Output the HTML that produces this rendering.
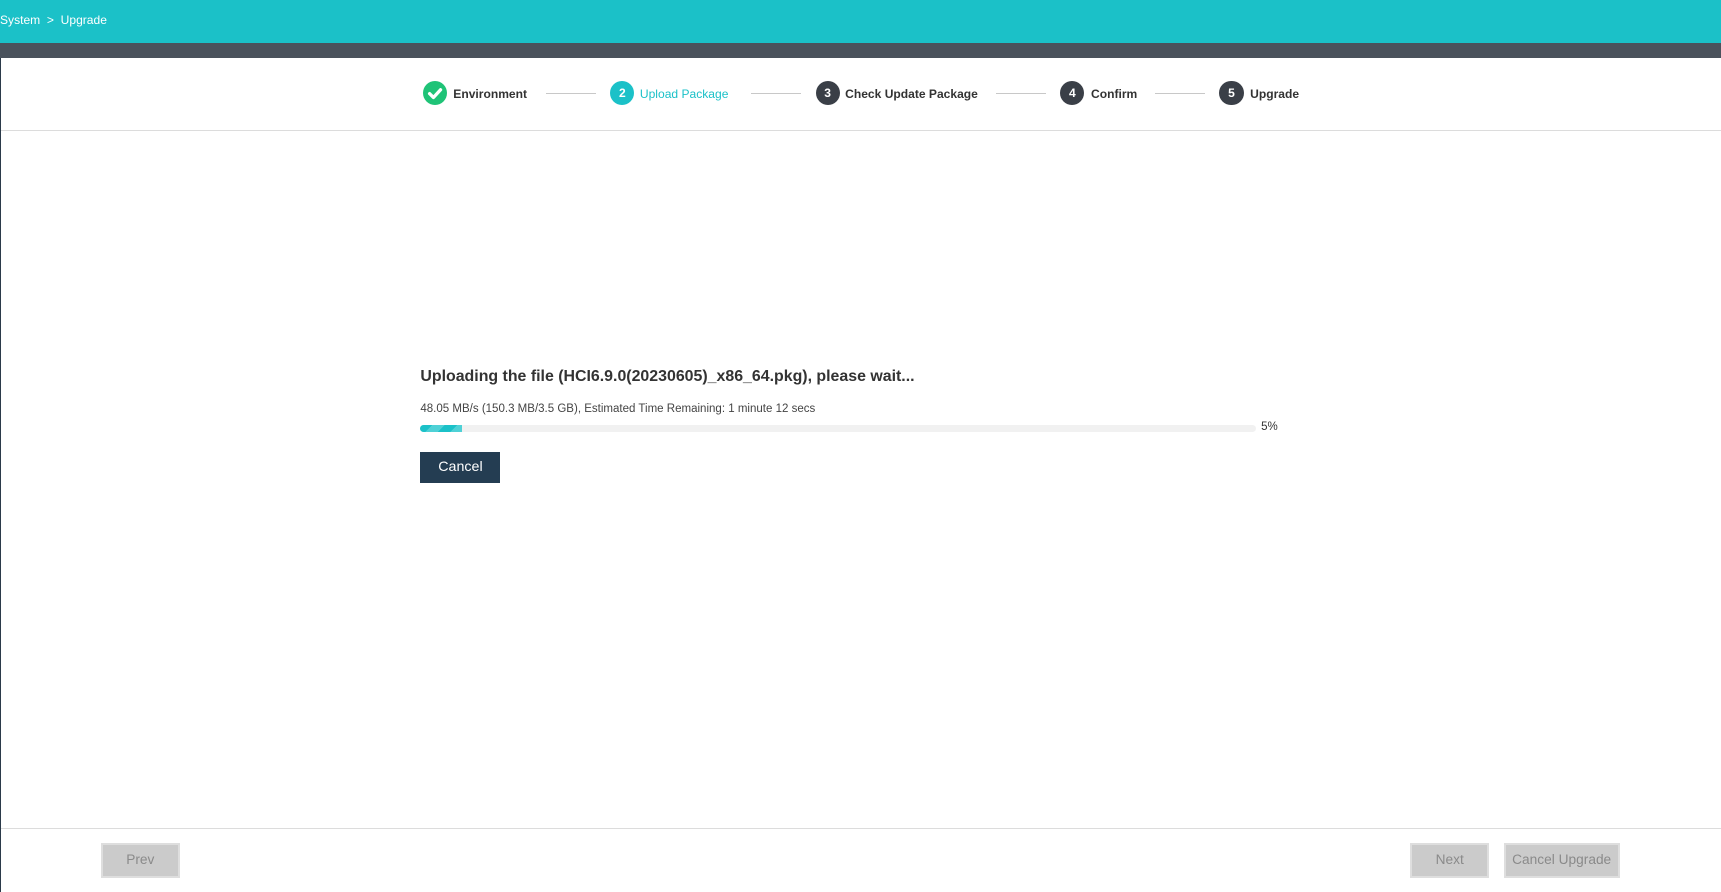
<!DOCTYPE html>
<html><head><style>
html{zoom:1.0976}
body{margin:0;width:1568px;height:813px;position:relative;overflow:hidden;font-family:"Liberation Sans",Arial,sans-serif;background:#fff}
.a{position:absolute}
.hd{left:0;top:0;width:1568px;height:39px;background:#1bc1c8;color:#fff;font-size:11px;line-height:38px}
.band{left:0;top:39px;width:1568px;height:14px;background:#4a525c}
.lb{left:0;top:53px;width:1px;height:760px;background:#2b3a4a}
.c{width:22px;height:22px;border-radius:50%;top:74px;color:#fff;font-size:11px;font-weight:bold;text-align:center;line-height:22px}
.t{top:79px;font-size:11px;font-weight:bold;color:#333;line-height:14px}
.ln{top:85px;height:1px;background:#c8c8c8;width:46px}
.btn{top:768px;height:28px;background:#cbcbcb;border:2px solid #dedede;color:#8a8a8a;font-size:12.5px;text-align:center;line-height:28px;box-sizing:content-box}
</style></head><body>
<div class="a hd">System &nbsp;&gt;&nbsp; Upgrade</div>
<div class="a band"></div>
<div class="a lb"></div>

<div class="a c" style="left:385px;background:#1fc377"><svg width="22" height="22" viewBox="0 0 22 22"><path d="M6 11.5l3.5 3.5 6.5-7" stroke="#fff" stroke-width="3" fill="none" stroke-linecap="round" stroke-linejoin="round"/></svg></div>
<div class="a t" style="left:413px">Environment</div>
<div class="a ln" style="left:497px"></div>
<div class="a c" style="left:556px;background:#1bc1c8">2</div>
<div class="a t" style="left:583px;color:#1bc1c8;font-weight:normal">Upload Package</div>
<div class="a ln" style="left:684px"></div>
<div class="a c" style="left:743px;background:#3a3f47">3</div>
<div class="a t" style="left:770px">Check Update Package</div>
<div class="a ln" style="left:907px"></div>
<div class="a c" style="left:966px;background:#3a3f47">4</div>
<div class="a t" style="left:994px">Confirm</div>
<div class="a ln" style="left:1052px"></div>
<div class="a c" style="left:1111px;background:#3a3f47">5</div>
<div class="a t" style="left:1139px">Upgrade</div>

<div class="a" style="left:1px;top:118px;width:1567px;height:1px;background:#dcdcdc"></div>

<div class="a" style="left:383px;top:335px;font-size:14.5px;font-weight:bold;color:#333">Uploading the file (HCI6.9.0(20230605)_x86_64.pkg), please wait...</div>
<div class="a" style="left:383px;top:367px;font-size:10.5px;color:#444">48.05 MB/s (150.3 MB/3.5 GB), Estimated Time Remaining: 1 minute 12 secs</div>
<div class="a" style="left:383px;top:387px;width:761px;height:7px;border-radius:4px;background:#f1f1f1;overflow:hidden"><div style="width:38px;height:7px;background:repeating-linear-gradient(135deg,#1bc1c8 0 8px,#4fd1d6 8px 16px)"></div></div>
<div class="a" style="left:1149px;top:384px;font-size:10.5px;color:#333">5%</div>
<div class="a" style="left:383px;top:412px;width:73px;height:28px;background:#243d52;color:#fff;font-size:13px;text-align:center;line-height:29px">Cancel</div>

<div class="a" style="left:1px;top:754px;width:1567px;height:1px;background:#dcdcdc"></div>
<div class="a btn" style="left:92px;width:68px">Prev</div>
<div class="a btn" style="left:1285px;width:68px">Next</div>
<div class="a btn" style="left:1370px;width:102px">Cancel Upgrade</div>
</body></html>
